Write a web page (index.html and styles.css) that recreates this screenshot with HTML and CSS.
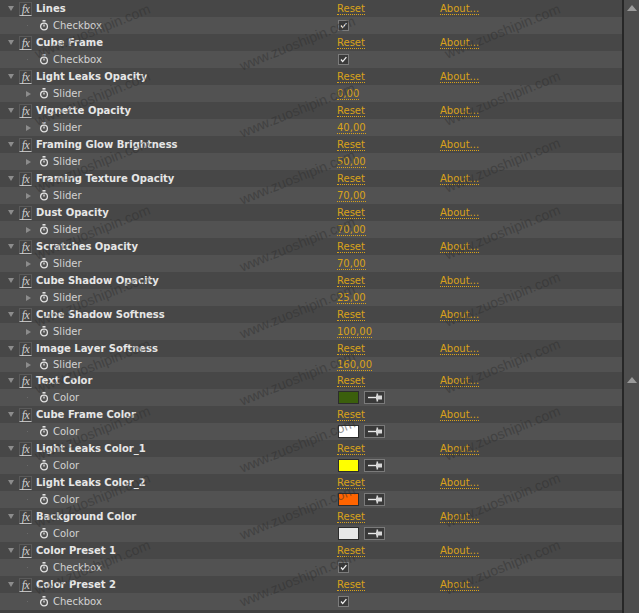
FILE: index.html
```html
<!DOCTYPE html>
<html>
<head>
<meta charset="utf-8">
<link rel="stylesheet" href="styles.css">
</head>
<body>
<div class="panel">
  <div class="list">
    <div class="row eff"><div class="lead"><span class="tw down"></span><span class="fx">fx</span><span class="name">Lines</span></div><span class="link">Reset</span><span class="link">About...</span></div>
    <div class="row sub"><div class="lead"><span class="tw dot"></span><svg class="sw" viewBox="0 0 10 11"><rect x="3.5" y="0" width="3" height="1.6"/><circle cx="5" cy="6.5" r="3.4"/><line x1="5" y1="6.5" x2="5" y2="4.6"/></svg><span class="label">Checkbox</span></div><div class="ctrl"><span class="cb"><svg viewBox="0 0 11 11"><path d="M2.5 5.5 L4.5 8 L9 2.5"/></svg></span></div></div>

    <div class="row eff"><div class="lead"><span class="tw down"></span><span class="fx">fx</span><span class="name">Cube Frame</span></div><span class="link">Reset</span><span class="link">About...</span></div>
    <div class="row sub"><div class="lead"><span class="tw dot"></span><svg class="sw" viewBox="0 0 10 11"><rect x="3.5" y="0" width="3" height="1.6"/><circle cx="5" cy="6.5" r="3.4"/><line x1="5" y1="6.5" x2="5" y2="4.6"/></svg><span class="label">Checkbox</span></div><div class="ctrl"><span class="cb"><svg viewBox="0 0 11 11"><path d="M2.5 5.5 L4.5 8 L9 2.5"/></svg></span></div></div>

    <div class="row eff"><div class="lead"><span class="tw down"></span><span class="fx">fx</span><span class="name">Light Leaks Opacity</span></div><span class="link">Reset</span><span class="link">About...</span></div>
    <div class="row sub"><div class="lead"><span class="tw right"></span><svg class="sw" viewBox="0 0 10 11"><rect x="3.5" y="0" width="3" height="1.6"/><circle cx="5" cy="6.5" r="3.4"/><line x1="5" y1="6.5" x2="5" y2="4.6"/></svg><span class="label">Slider</span></div><div class="ctrl"><span class="link">0,00</span></div></div>

    <div class="row eff"><div class="lead"><span class="tw down"></span><span class="fx">fx</span><span class="name">Vignette Opacity</span></div><span class="link">Reset</span><span class="link">About...</span></div>
    <div class="row sub"><div class="lead"><span class="tw right"></span><svg class="sw" viewBox="0 0 10 11"><rect x="3.5" y="0" width="3" height="1.6"/><circle cx="5" cy="6.5" r="3.4"/><line x1="5" y1="6.5" x2="5" y2="4.6"/></svg><span class="label">Slider</span></div><div class="ctrl"><span class="link">40,00</span></div></div>

    <div class="row eff"><div class="lead"><span class="tw down"></span><span class="fx">fx</span><span class="name">Framing Glow Brightness</span></div><span class="link">Reset</span><span class="link">About...</span></div>
    <div class="row sub"><div class="lead"><span class="tw right"></span><svg class="sw" viewBox="0 0 10 11"><rect x="3.5" y="0" width="3" height="1.6"/><circle cx="5" cy="6.5" r="3.4"/><line x1="5" y1="6.5" x2="5" y2="4.6"/></svg><span class="label">Slider</span></div><div class="ctrl"><span class="link">50,00</span></div></div>

    <div class="row eff"><div class="lead"><span class="tw down"></span><span class="fx">fx</span><span class="name">Framing Texture Opacity</span></div><span class="link">Reset</span><span class="link">About...</span></div>
    <div class="row sub"><div class="lead"><span class="tw right"></span><svg class="sw" viewBox="0 0 10 11"><rect x="3.5" y="0" width="3" height="1.6"/><circle cx="5" cy="6.5" r="3.4"/><line x1="5" y1="6.5" x2="5" y2="4.6"/></svg><span class="label">Slider</span></div><div class="ctrl"><span class="link">70,00</span></div></div>

    <div class="row eff"><div class="lead"><span class="tw down"></span><span class="fx">fx</span><span class="name">Dust Opacity</span></div><span class="link">Reset</span><span class="link">About...</span></div>
    <div class="row sub"><div class="lead"><span class="tw right"></span><svg class="sw" viewBox="0 0 10 11"><rect x="3.5" y="0" width="3" height="1.6"/><circle cx="5" cy="6.5" r="3.4"/><line x1="5" y1="6.5" x2="5" y2="4.6"/></svg><span class="label">Slider</span></div><div class="ctrl"><span class="link">70,00</span></div></div>

    <div class="row eff"><div class="lead"><span class="tw down"></span><span class="fx">fx</span><span class="name">Scratches Opacity</span></div><span class="link">Reset</span><span class="link">About...</span></div>
    <div class="row sub"><div class="lead"><span class="tw right"></span><svg class="sw" viewBox="0 0 10 11"><rect x="3.5" y="0" width="3" height="1.6"/><circle cx="5" cy="6.5" r="3.4"/><line x1="5" y1="6.5" x2="5" y2="4.6"/></svg><span class="label">Slider</span></div><div class="ctrl"><span class="link">70,00</span></div></div>

    <div class="row eff"><div class="lead"><span class="tw down"></span><span class="fx">fx</span><span class="name">Cube Shadow Opacity</span></div><span class="link">Reset</span><span class="link">About...</span></div>
    <div class="row sub"><div class="lead"><span class="tw right"></span><svg class="sw" viewBox="0 0 10 11"><rect x="3.5" y="0" width="3" height="1.6"/><circle cx="5" cy="6.5" r="3.4"/><line x1="5" y1="6.5" x2="5" y2="4.6"/></svg><span class="label">Slider</span></div><div class="ctrl"><span class="link">25,00</span></div></div>

    <div class="row eff"><div class="lead"><span class="tw down"></span><span class="fx">fx</span><span class="name">Cube Shadow Softness</span></div><span class="link">Reset</span><span class="link">About...</span></div>
    <div class="row sub"><div class="lead"><span class="tw right"></span><svg class="sw" viewBox="0 0 10 11"><rect x="3.5" y="0" width="3" height="1.6"/><circle cx="5" cy="6.5" r="3.4"/><line x1="5" y1="6.5" x2="5" y2="4.6"/></svg><span class="label">Slider</span></div><div class="ctrl"><span class="link">100,00</span></div></div>

    <div class="row eff"><div class="lead"><span class="tw down"></span><span class="fx">fx</span><span class="name">Image Layer Softness</span></div><span class="link">Reset</span><span class="link">About...</span></div>
    <div class="row sub short"><div class="lead"><span class="tw right"></span><svg class="sw" viewBox="0 0 10 11"><rect x="3.5" y="0" width="3" height="1.6"/><circle cx="5" cy="6.5" r="3.4"/><line x1="5" y1="6.5" x2="5" y2="4.6"/></svg><span class="label">Slider</span></div><div class="ctrl"><span class="link">160,00</span></div></div>

    <div class="row eff"><div class="lead"><span class="tw down"></span><span class="fx">fx</span><span class="name">Text Color</span></div><span class="link">Reset</span><span class="link">About...</span></div>
    <div class="row sub"><div class="lead"><span class="tw dot"></span><svg class="sw" viewBox="0 0 10 11"><rect x="3.5" y="0" width="3" height="1.6"/><circle cx="5" cy="6.5" r="3.4"/><line x1="5" y1="6.5" x2="5" y2="4.6"/></svg><span class="label">Color</span></div><div class="ctrl"><span class="swatch" style="background:#3b5f0c"></span><span class="pick"><svg viewBox="0 0 18 11"><line x1="2" y1="5.5" x2="10" y2="5.5"/><rect class="bulb" x="10" y="3.5" width="6" height="4"/><rect class="bulb" x="10.5" y="1.5" width="1.6" height="8"/></svg></span></div></div>

    <div class="row eff"><div class="lead"><span class="tw down"></span><span class="fx">fx</span><span class="name">Cube Frame Color</span></div><span class="link">Reset</span><span class="link">About...</span></div>
    <div class="row sub"><div class="lead"><span class="tw dot"></span><svg class="sw" viewBox="0 0 10 11"><rect x="3.5" y="0" width="3" height="1.6"/><circle cx="5" cy="6.5" r="3.4"/><line x1="5" y1="6.5" x2="5" y2="4.6"/></svg><span class="label">Color</span></div><div class="ctrl"><span class="swatch" style="background:#ffffff"></span><span class="pick"><svg viewBox="0 0 18 11"><line x1="2" y1="5.5" x2="10" y2="5.5"/><rect class="bulb" x="10" y="3.5" width="6" height="4"/><rect class="bulb" x="10.5" y="1.5" width="1.6" height="8"/></svg></span></div></div>

    <div class="row eff"><div class="lead"><span class="tw down"></span><span class="fx">fx</span><span class="name">Light Leaks Color_1</span></div><span class="link">Reset</span><span class="link">About...</span></div>
    <div class="row sub"><div class="lead"><span class="tw dot"></span><svg class="sw" viewBox="0 0 10 11"><rect x="3.5" y="0" width="3" height="1.6"/><circle cx="5" cy="6.5" r="3.4"/><line x1="5" y1="6.5" x2="5" y2="4.6"/></svg><span class="label">Color</span></div><div class="ctrl"><span class="swatch" style="background:#ffff00"></span><span class="pick"><svg viewBox="0 0 18 11"><line x1="2" y1="5.5" x2="10" y2="5.5"/><rect class="bulb" x="10" y="3.5" width="6" height="4"/><rect class="bulb" x="10.5" y="1.5" width="1.6" height="8"/></svg></span></div></div>

    <div class="row eff"><div class="lead"><span class="tw down"></span><span class="fx">fx</span><span class="name">Light Leaks Color_2</span></div><span class="link">Reset</span><span class="link">About...</span></div>
    <div class="row sub"><div class="lead"><span class="tw dot"></span><svg class="sw" viewBox="0 0 10 11"><rect x="3.5" y="0" width="3" height="1.6"/><circle cx="5" cy="6.5" r="3.4"/><line x1="5" y1="6.5" x2="5" y2="4.6"/></svg><span class="label">Color</span></div><div class="ctrl"><span class="swatch" style="background:#ff6400"></span><span class="pick"><svg viewBox="0 0 18 11"><line x1="2" y1="5.5" x2="10" y2="5.5"/><rect class="bulb" x="10" y="3.5" width="6" height="4"/><rect class="bulb" x="10.5" y="1.5" width="1.6" height="8"/></svg></span></div></div>

    <div class="row eff"><div class="lead"><span class="tw down"></span><span class="fx">fx</span><span class="name">Background Color</span></div><span class="link">Reset</span><span class="link">About...</span></div>
    <div class="row sub"><div class="lead"><span class="tw dot"></span><svg class="sw" viewBox="0 0 10 11"><rect x="3.5" y="0" width="3" height="1.6"/><circle cx="5" cy="6.5" r="3.4"/><line x1="5" y1="6.5" x2="5" y2="4.6"/></svg><span class="label">Color</span></div><div class="ctrl"><span class="swatch" style="background:#e8e8e8"></span><span class="pick"><svg viewBox="0 0 18 11"><line x1="2" y1="5.5" x2="10" y2="5.5"/><rect class="bulb" x="10" y="3.5" width="6" height="4"/><rect class="bulb" x="10.5" y="1.5" width="1.6" height="8"/></svg></span></div></div>

    <div class="row eff"><div class="lead"><span class="tw down"></span><span class="fx">fx</span><span class="name">Color Preset 1</span></div><span class="link">Reset</span><span class="link">About...</span></div>
    <div class="row sub"><div class="lead"><span class="tw dot"></span><svg class="sw" viewBox="0 0 10 11"><rect x="3.5" y="0" width="3" height="1.6"/><circle cx="5" cy="6.5" r="3.4"/><line x1="5" y1="6.5" x2="5" y2="4.6"/></svg><span class="label">Checkbox</span></div><div class="ctrl"><span class="cb"><svg viewBox="0 0 11 11"><path d="M2.5 5.5 L4.5 8 L9 2.5"/></svg></span></div></div>

    <div class="row eff"><div class="lead"><span class="tw down"></span><span class="fx">fx</span><span class="name">Color Preset 2</span></div><span class="link">Reset</span><span class="link">About...</span></div>
    <div class="row sub"><div class="lead"><span class="tw dot"></span><svg class="sw" viewBox="0 0 10 11"><rect x="3.5" y="0" width="3" height="1.6"/><circle cx="5" cy="6.5" r="3.4"/><line x1="5" y1="6.5" x2="5" y2="4.6"/></svg><span class="label">Checkbox</span></div><div class="ctrl"><span class="cb"><svg viewBox="0 0 11 11"><path d="M2.5 5.5 L4.5 8 L9 2.5"/></svg></span></div></div>

    <div class="watermarks" aria-hidden="true">
      <span>www.zuoshipin.com</span><span>www.zuoshipin.com</span><span>www.zuoshipin.com</span>
      <span>www.zuoshipin.com</span><span>www.zuoshipin.com</span><span>www.zuoshipin.com</span>
      <span>www.zuoshipin.com</span><span>www.zuoshipin.com</span><span>www.zuoshipin.com</span>
      <span>www.zuoshipin.com</span><span>www.zuoshipin.com</span><span>www.zuoshipin.com</span>
      <span>www.zuoshipin.com</span><span>www.zuoshipin.com</span><span>www.zuoshipin.com</span>
      <span>www.zuoshipin.com</span><span>www.zuoshipin.com</span><span>www.zuoshipin.com</span>
      <span>www.zuoshipin.com</span><span>www.zuoshipin.com</span><span>www.zuoshipin.com</span>
      <span>www.zuoshipin.com</span><span>www.zuoshipin.com</span><span>www.zuoshipin.com</span>
      <span>www.zuoshipin.com</span><span>www.zuoshipin.com</span><span>www.zuoshipin.com</span>
    </div>
  </div>
  <div class="scrollbar">
    <span class="arrow"></span>
    <span class="arrow mid"></span>
  </div>
</div>
</body>
</html>
```
FILE: styles.css
```css
* { box-sizing: border-box; }
html, body { margin: 0; padding: 0; }
body {
  width: 639px;
  height: 613px;
  overflow: hidden;
  background: #3e3e3e;
  font-family: "DejaVu Sans", Verdana, sans-serif;
  font-size: 10px;
}
.panel {
  display: flex;
  height: 613px;
}
.list {
  position: relative;
  width: 622px;
  overflow: hidden;
  background: #404040;
}
.row {
  display: grid;
  grid-template-columns: 337px 103px 1fr;
  align-items: center;
  height: 17px;
  white-space: nowrap;
}
.row.eff { background: #474747; }
.row.sub { background: #525252; }
.row.sub.short { height: 15px; }
.lead {
  display: flex;
  align-items: center;
  height: 100%;
}
.eff .lead { padding-left: 8px; }
.sub .lead { padding-left: 26px; }
.tw { flex: none; display: block; width: 0; height: 0; }
.tw.down {
  border-left: 3.5px solid transparent;
  border-right: 3.5px solid transparent;
  border-top: 5px solid #8c8c8c;
  margin-right: 5px;
}
.tw.right {
  border-top: 3.5px solid transparent;
  border-bottom: 3.5px solid transparent;
  border-left: 5px solid #8c8c8c;
  margin-right: 8px;
}
.tw.dot {
  width: 1px;
  height: 1px;
  background: #6a6a6a;
  margin-left: 1px;
  margin-right: 11px;
}
.fx {
  flex: none;
  width: 13px;
  height: 14px;
  line-height: 12px;
  margin-right: 4px;
  border: 1px solid #5a5a5a;
  border-bottom-color: #bdbdbd;
  background: #434343;
  color: #cfcfcf;
  font-family: "Liberation Serif", "DejaVu Serif", serif;
  font-style: italic;
  font-size: 12px;
  text-align: center;
  letter-spacing: -0.5px;
}
.name {
  color: #e6e6e6;
  font-weight: bold;
}
.sw {
  flex: none;
  width: 10px;
  height: 11px;
  margin-right: 4px;
  fill: none;
  stroke: #e2e2e2;
  stroke-width: 1.3;
}
.sw rect { fill: #e2e2e2; stroke: none; }
.label { color: #d2d2d2; }
.link {
  justify-self: start;
  color: #d9a21a;
  line-height: 11px;
  border-bottom: 1px dotted #d9a21a;
}
.ctrl {
  display: flex;
  align-items: center;
  gap: 5px;
}
.cb {
  width: 11px;
  height: 11px;
  margin-left: 1px;
  border: 1px solid #7c7c7c;
  background: #3a3a3a;
  display: flex;
}
.cb svg {
  width: 9px;
  height: 9px;
  fill: none;
  stroke: #f0f0f0;
  stroke-width: 1.6;
}
.swatch {
  width: 21px;
  height: 13px;
  margin-left: 1px;
  border: 1px solid #2c2c2c;
}
.pick {
  width: 21px;
  height: 13px;
  border: 1px solid #7a7a7a;
  background: #393939;
  display: flex;
  align-items: center;
  justify-content: center;
}
.pick svg {
  width: 18px;
  height: 11px;
  stroke: #e8e8e8;
  stroke-width: 1.4;
}
.pick .bulb { fill: #d8d8d8; stroke: none; }

/* watermark overlay */
.watermarks {
  position: absolute;
  left: -10px;
  top: -3px;
  display: grid;
  grid-template-columns: repeat(3, 205px);
  grid-auto-rows: 67px;
  pointer-events: none;
}
.watermarks span {
  justify-self: center;
  align-self: center;
  color: rgba(48, 48, 48, 0.5);
  font-family: "Liberation Sans", sans-serif;
  font-size: 14px;
  white-space: nowrap;
  transform: rotate(-22deg);
}
.watermarks span:nth-child(3n+2) {
  transform: translateY(12px) rotate(-22deg);
}

.scrollbar {
  position: relative;
  width: 17px;
  border-left: 2px solid #272727;
  background: #4d4d4d;
}
.arrow {
  position: absolute;
  left: 3px;
  top: 5px;
  width: 0;
  height: 0;
  border-left: 5px solid transparent;
  border-right: 5px solid transparent;
  border-bottom: 6px solid #9a9a9a;
}
.arrow.mid { top: 377px; }
```
